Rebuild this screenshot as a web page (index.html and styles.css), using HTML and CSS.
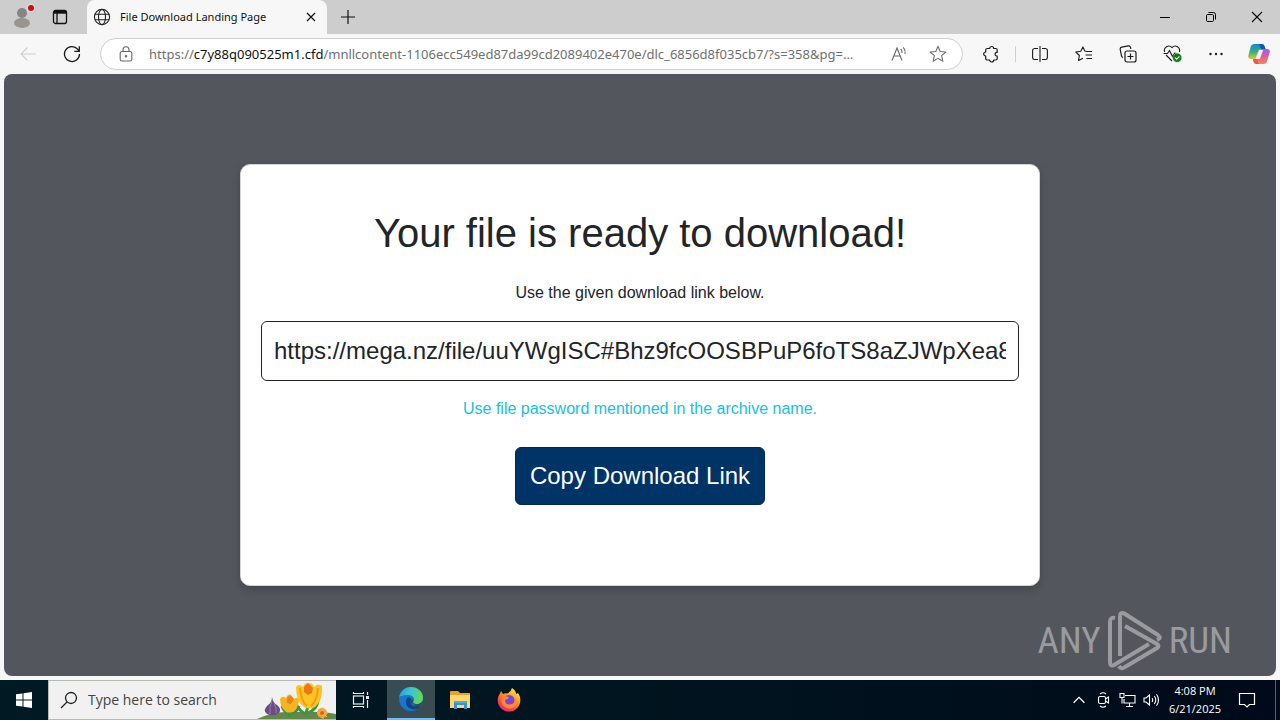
FILE: index.html
```html
<!DOCTYPE html>
<html lang="en">
<head>
<meta charset="utf-8">
<title>File Download Landing Page</title>
<link rel="stylesheet" href="styles.css">
</head>
<body>
<div class="desktop">
  <header class="titlebar">
    <button class="title-btn profile" aria-label="Profile">
      <svg width="26" height="30" viewBox="0 0 26 30"><circle cx="13" cy="11" r="5" fill="#858585"/><ellipse cx="13" cy="21" rx="8" ry="5" fill="#989591"/><circle cx="22" cy="6" r="4.5" fill="#e2d5d7"/><circle cx="22" cy="6" r="3" fill="#c50f1f"/></svg>
    </button>
    <button class="title-btn" aria-label="Tab actions">
      <svg width="16" height="16" viewBox="0 0 16 16" fill="none" stroke="#111" stroke-width="1.3"><rect x="1.5" y="1.5" width="13" height="13" rx="2"/><path d="M2 3.2h12" stroke-width="3"/><path d="M5 4v10"/></svg>
    </button>
    <div class="tab">
      <svg width="18" height="18" viewBox="0 0 18 18" fill="none" stroke="#222" stroke-width="1.1"><circle cx="9" cy="9" r="7.6"/><ellipse cx="9" cy="9" rx="3.5" ry="7.6"/><path d="M2 6.3h14M2 11.7h14"/></svg>
      <span class="tab-title">File Download Landing Page</span>
      <button class="tab-close" aria-label="Close tab"><svg width="10" height="10" viewBox="0 0 10 10" stroke="#111" stroke-width="1.2"><path d="M1 1l8 8M9 1L1 9"/></svg></button>
    </div>
    <button class="new-tab" aria-label="New tab"><svg width="14" height="14" viewBox="0 0 14 14" stroke="#111" stroke-width="1.2"><path d="M7 0v14M0 7h14"/></svg></button>
    <div class="window-controls">
      <button class="window-btn" aria-label="Minimize"><svg width="10" height="10" viewBox="0 0 10 10" stroke="#000"><path d="M0 5.5h10"/></svg></button>
      <button class="window-btn" aria-label="Restore"><svg width="12" height="12" viewBox="0 0 12 12" fill="none" stroke="#000"><rect x="1.5" y="3.5" width="7" height="7" rx="1.2"/><path d="M3.5 1.5h5a2 2 0 0 1 2 2v5"/></svg></button>
      <button class="window-btn" aria-label="Close"><svg width="12" height="12" viewBox="0 0 12 12" stroke="#000" stroke-width="1.1"><path d="M1 1l10 10M11 1L1 11"/></svg></button>
    </div>
  </header>

  <nav class="toolbar">
    <button class="tool" aria-label="Back" disabled><svg width="18" height="16" viewBox="0 0 18 16" fill="none" stroke="#cfcfcf" stroke-width="1.1"><path d="M17 8H2M8.500 1.500L2 8l6.500 6.500"/></svg></button>
    <button class="tool" aria-label="Refresh"><svg width="18" height="18" viewBox="0 0 18 18" fill="none" stroke="#1b1b1b" stroke-width="1.3"><path d="M16.500 9A7.500 7.500 0 1 1 14.800 4.300L16 6M16.300 1.200V6.300H11.300"/></svg></button>
    <div class="address">
      <button class="address-btn" aria-label="Site information"><svg width="14" height="16" viewBox="0 0 14 16" fill="none" stroke="#666" stroke-width="1.1"><rect x="1.200" y="5.500" width="11.600" height="9.500" rx="1.800"/><path d="M4 5.500V3.800a3 3 0 0 1 6 0v1.700"/><circle cx="7" cy="10.300" r=".7" fill="#555"/></svg></button>
      <div class="url">
        <input class="url-input" id="address" type="text" aria-label="Address">
        <label class="url-text" for="address">https://<span class="url-host">c7y88q090525m1.cfd</span>/mnllcontent-1106ecc549ed87da99cd2089402e470e/dlc_6856d8f035cb7/?s=358&amp;pg=...</label>
      </div>
      <button class="address-btn read" aria-label="Read aloud"><svg width="17" height="16" viewBox="0 0 17 16" fill="none" stroke="#666" stroke-width="1.1"><path d="M1 14.500L6 2l5 12.500M2.800 10h6.500M9.700 3q1.500 1.500 1.300 4M12.300 1.300q2.300 2.700 1.800 6.700"/></svg></button>
      <button class="address-btn star" aria-label="Add to favorites"><svg width="18" height="18" viewBox="0 0 18 18" fill="none" stroke="#707070" stroke-width="1.1" stroke-linejoin="round"><path d="M9 1.300l2.200 5.200 5.700.5-4.300 3.700 1.300 5.600L9 13.400l-4.900 2.900 1.300-5.600L1.100 7l5.700-.5z"/></svg></button>
    </div>
    <button class="tool" aria-label="Extensions"><svg width="18" height="18" viewBox="0 0 18 18" fill="none" stroke="#1b1b1b" stroke-width="1.2" stroke-linejoin="round"><path d="M5 3.500h2.700a2 2 0 0 1 4 0h2a1.500 1.500 0 0 1 1.500 1.500v2.300h-.7a1.900 1.900 0 0 0 0 3.700h.7v2.500a1.500 1.500 0 0 1-1.500 1.500h-2a2 2 0 0 1-4 0H5A1.500 1.500 0 0 1 3.700 13.500V11a2 2 0 0 1 0-4V5A1.500 1.500 0 0 1 5 3.500z"/></svg></button>
    <span class="divider"></span>
    <button class="tool" aria-label="Split screen"><svg width="16" height="16" viewBox="0 0 16 16" fill="none" stroke="#1b1b1b" stroke-width="1.1"><path d="M6 2.500H2.500A2 2 0 0 0 .6 4.400v7.200a2 2 0 0 0 1.900 1.900H6M10 2.500h3.500a2 2 0 0 1 1.900 1.900v7.200a2 2 0 0 1-1.900 1.900H10M8 0v16"/></svg></button>
    <button class="tool" aria-label="Favorites"><svg width="18" height="16" viewBox="0 0 18 16" fill="none" stroke="#1b1b1b" stroke-width="1.1" stroke-linejoin="round"><path d="M11.500 5.300L9.800 5 7.900.9 5.800 5.200.8 6l3.600 3.500-.9 5L8 12.300M11.500 5.500H17M10.500 9H17M11.500 12.500H17"/></svg></button>
    <button class="tool" aria-label="Collections"><svg width="18" height="18" viewBox="0 0 18 18" fill="none" stroke="#1b1b1b" stroke-width="1.200"><path d="M4 12.500a2 2 0 0 1-1.500-1.600L1.200 4.500a2 2 0 0 1 1.500-2.300l6.500-1.300a2 2 0 0 1 2.300 1.500l.3 1.400"/><rect x="6" y="6" width="11" height="11" rx="2"/><path d="M11.500 8.500v6M8.500 11.500h6"/></svg></button>
    <button class="tool" aria-label="Browser essentials"><svg width="20" height="18" viewBox="0 0 20 18" fill="none" stroke="#1b1b1b" stroke-width="1.1"><path d="M2.700 7A4.300 4.300 0 0 1 10 2.700 4.300 4.300 0 0 1 17.300 7M4 10l6 6M1.500 8.500h4L7.500 5.500l3 6 2-3.300h2"/><circle cx="15.200" cy="12.700" r="4.500" fill="#107c10" stroke="#fff" stroke-width=".3"/><path d="M13.200 12.700l1.500 1.500 2.700-2.700" stroke="#fff"/></svg></button>
    <button class="tool" aria-label="Settings and more"><svg width="16" height="16" viewBox="0 0 16 16" fill="#1b1b1b"><circle cx="2.500" cy="8" r="1.200"/><circle cx="8" cy="8" r="1.200"/><circle cx="13.500" cy="8" r="1.200"/></svg></button>
    <button class="tool copilot" aria-label="Copilot"><svg width="24" height="22" viewBox="0 0 24 22"><defs><linearGradient id="cp1" x1="0" y1="0" x2="0" y2="1"><stop offset="0" stop-color="#1685d8"/><stop offset=".55" stop-color="#38b17c"/><stop offset="1" stop-color="#e6c72b"/></linearGradient><linearGradient id="cp2" x1="0" y1="0" x2="0" y2="1"><stop offset="0" stop-color="#9a5df0"/><stop offset=".5" stop-color="#e25c9c"/><stop offset="1" stop-color="#f68a54"/></linearGradient></defs><path d="M7 1h8q2 0 2.700 2.600L18.500 6H14q-2 0-2.700 2L9 14.500q-.7 1.500-2.500 1.500H4q-3.200 0-2.800-3L3.700 3.700Q4.500 1 7 1z" fill="url(#cp1)"/><path d="M12 1h3q2 0 2.700 2.600L18.500 6H14z" fill="#1755b0"/><path d="M17 21H9.500Q7.300 21 6.500 18.400L6 16q2.500 0 3.200-2l2.200-6q.7-2 2.600-2h6q3.300 0 2.800 3l-2.700 9Q19.500 21 17 21z" fill="url(#cp2)"/><path d="M12 21H9.500Q7.300 21 6.500 18.400L6 16h4z" fill="#ed5948"/><path d="M12.200 7h4l-3.400 9H8.300z" fill="#f7ecf2"/></svg></button>
  </nav>

  <div class="viewport">
    <main class="card">
      <h1 class="heading">Your file is ready to download!</h1>
      <p class="intro"><label for="link">Use the given download link below.</label></p>
      <input class="link-input" id="link" type="text" readonly value="https://mega.nz/file/uuYWgISC#Bhz9fcOOSBPuP6foTS8aZJWpXea8">
      <p class="hint">Use file password mentioned in the archive name.</p>
      <button class="copy-btn">Copy Download Link</button>
    </main>
    <div class="watermark">
      <span>ANY</span>
      <svg width="56" height="62" viewBox="0 0 56 62" fill="none" stroke="#999b9f" stroke-width="4" stroke-linejoin="round"><path d="M8 8Q3 7 3 12v40q0 5 4 3l35-21"/><path d="M13 46V7q0-6 5-3l33 21q4 3-1 5"/><path d="M18 16l32 18q3 2 0 4L18 57q-4 3-6-1"/></svg>
      <span>RUN</span>
    </div>
  </div>

  <footer class="taskbar">
    <button class="start" aria-label="Start"><svg width="16" height="16" viewBox="0 0 16 16" fill="#fff"><path d="M0 2.300L6.500 1.400V7.500H0zM7.500 1.200L16 0v7.500H7.500zM0 8.500h6.500v6.100L0 13.700zM7.500 8.500H16V16l-8.500-1.200z"/></svg></button>
    <div class="search">
      <svg class="search-icon" width="18" height="18" viewBox="0 0 18 18" fill="none" stroke="#222" stroke-width="1.300"><circle cx="11" cy="7" r="5.500"/><path d="M7 11l-6 6"/></svg>
      <input class="search-input" type="text" placeholder="Type here to search" aria-label="Type here to search">
      <svg class="flowers" width="79" height="38" viewBox="0 0 79 38"><path d="M0 38Q18 29 44 31 64 30 79 33v5z" fill="#64874d"/><path d="M32 36q3-7 1-15M33 34q-6-3-8-9M36 33q4-3 6-8M48 34q4-8 3-17M47 32Q40 28 38 19M51 32q9-4 10-12" fill="none" stroke="#3c9444" stroke-width="3"/><path d="M15 16q1 6 5 8 5 4 2 8-5 4-12 1-5-4 1-9 4-3 4-8z" fill="#6b4d84"/><path d="M15 19q-3 8-2 14M17 22q3 5 2 10" stroke="#9b7ab0" fill="none"/><path d="M23 18q2-4 6-1 2-5 5-3l3 4q4-3 5 1-1 9-6 12-5 1-7 0-6-5-6-13z" fill="#f8b420"/><path d="M30 17l3-3 4 4-3 5-4-1z" fill="#e98217"/><path d="M39 6q3-4 7 0 2-5 6-4 4 0 5 4 4-4 8-1 1 15-7 21-6 3-11 0-8-6-8-20z" fill="#fbc421"/><path d="M47 6l4-4 5 5-1 5-4 2-4-3z" fill="#e87819"/><path d="M43 7q1 13 7 18M61 7q-1 13-7 18" stroke="#f09c18" stroke-width="2" fill="none"/><circle cx="65" cy="32" r="5" fill="#f5a02f"/><path d="M66 26v12M60 32h11M61 28l9 8" stroke="#f9b955"/><circle cx="65" cy="32" r="2" fill="#ca6824"/></svg>
    </div>
    <button class="task" aria-label="Task View"><svg width="18" height="18" viewBox="0 0 18 18" fill="none" stroke="#e8ecee" stroke-width="1.200"><rect x="1.500" y="5" width="10" height="8"/><path d="M1.500 1v1.500h10V1M1.500 17v-1.500h10V17M15.500 1v3M15.500 9v8"/><path d="M14 6.500h3" stroke-width="3"/></svg></button>
    <button class="task active" aria-label="Microsoft Edge"><svg width="24" height="24" viewBox="0 0 24 24"><defs><linearGradient id="e1" x1="0" y1="0" x2="1" y2=".3"><stop offset="0" stop-color="#249de0"/><stop offset=".5" stop-color="#37c6d3"/><stop offset="1" stop-color="#62d75e"/></linearGradient></defs><circle cx="12" cy="12" r="12" fill="#1677cc"/><path d="M19 21.700Q23 19 23.500 14l-5 3-4 1z" fill="#394c52"/><path d="M.2 10C1.500 4 6 0 12 0c7 0 12 5 12 10.700 0 4-3 6.300-6.500 6.300-3 0-4-1.300-3-2.700 1.500-2.600-.2-5.300-3.500-6C6 7.300 1.500 9 .2 10z" fill="url(#e1)"/><path d="M8 11c-3 6 1 11.500 7 11.500 3 0 5-1 6.500-3.500-6 2-10-1-10-4 0-1 .4-2 1-3-2-2-3.500-2-4.500-1z" fill="#0c4685"/><path d="M14.200 14.500c-1 1.500.3 2.500 3 2.500-3 .8-5.400-.2-5.400-2.300 0-1.200.4-2.200 1.200-2.700.7.500 1 1.200 1.200 2.500z" fill="#394c52"/></svg></button>
    <button class="task" aria-label="File Explorer"><svg width="22" height="20" viewBox="0 0 22 20"><path d="M1 2q0-1 1-1h7l2 2h10v15H1z" fill="#e6a329"/><path d="M1 5h20v13H1z" fill="#ffd86c"/><path d="M5 19v-7q0-1 1-1h11q1 0 1 1v7h-3v-4H8v4z" fill="#3594d4"/><path d="M6 12h11" stroke="#7fbde3"/></svg></button>
    <button class="task" aria-label="Firefox"><svg width="24" height="24" viewBox="0 0 24 24"><defs><linearGradient id="f1" x1=".8" y1="0" x2=".2" y2="1"><stop offset="0" stop-color="#fff34c"/><stop offset=".4" stop-color="#ff9524"/><stop offset=".75" stop-color="#ff3d4c"/><stop offset="1" stop-color="#e2258c"/></linearGradient></defs><path d="M15 0c3 2 4 4 4 6l2-1c2 3 2.500 5 2.300 8A11.300 11.300 0 1 1 3 5.500L4 3l2 3q2-1 4-.5Q14 4 15 0z" fill="url(#f1)"/><circle cx="12" cy="12.500" r="5.500" fill="#7745dd"/><path d="M5 8q4 0 7 1l-1 2q-3 0-3 2 1 4 5 3.500 5-.5 5-6c3 5 0 10-5.500 10C6 20.500 3 15 5 8z" fill="#ff8a2e"/></svg></button>
    <div class="tray">
      <button class="tray-btn" aria-label="Show hidden icons"><svg width="12" height="8" viewBox="0 0 12 8" fill="none" stroke="#fff" stroke-width="1.300"><path d="M.6 6.800L6 1.400l5.400 5.400"/></svg></button>
      <button class="tray-btn" aria-label="Meet Now"><svg width="14" height="16" viewBox="0 0 14 16" fill="none" stroke="#fff" stroke-width="1.100"><rect x="2.500" y="4.500" width="7" height="7" rx="1.500"/><path d="M9.500 7l3-2v6l-3-2M4 2Q7-.5 10 2M4 14q3 2.500 6 0"/></svg></button>
      <button class="tray-btn" aria-label="Network"><svg width="17" height="16" viewBox="0 0 17 16" fill="none" stroke="#fff" stroke-width="1.100"><path d="M6 3.500h10v7.500H5V7M10.500 11v3M7 14.500h7M1 1.500h4v4H1zM3 5.500v6"/></svg></button>
      <button class="tray-btn" aria-label="Volume"><svg width="17" height="14" viewBox="0 0 17 14" fill="none" stroke="#fff" stroke-width="1.100"><path d="M1 5h2l3.500-3v10L3 9H1zM9 5q1.500 2 0 4M11.300 3q3 4 0 8M13.500 1.300q4 5.700 0 11.400"/></svg></button>
      <button class="clock"><span>4:08 PM</span><span>6/21/2025</span></button>
      <button class="notify" aria-label="Notifications"><svg width="18" height="18" viewBox="0 0 18 18" fill="none" stroke="#fff" stroke-width="1.200"><path d="M1.500 2.500h15v11h-5L9 16l-2.500-2.500h-5z"/></svg></button>
      <button class="show-desktop" aria-label="Show desktop"></button>
    </div>
  </footer>
</div>
</body>
</html>
```
FILE: styles.css
```css
* { box-sizing: border-box; }
body { margin: 0; }
button { border: 0; padding: 0; background: none; font: inherit; color: inherit; display: flex; align-items: center; justify-content: center; flex: none; }
input { font: inherit; color: inherit; border: 0; padding: 0; background: none; outline: 0; min-width: 0; }
svg { flex: none; display: block; }

.desktop { min-height: 100vh; display: flex; flex-direction: column; background: #f7f7f7; color: #1b1b1b; font: 12px/16px "Open Sans", "Noto Sans", sans-serif; }

.titlebar { display: flex; height: 34px; background: #cdcdcd; padding-left: 3px; }
.title-btn { width: 38px; }
.tab { display: flex; align-items: center; width: 240px; margin-left: 8px; padding: 0 10px 0 6px; gap: 9px; background: #f7f7f7; border-radius: 8px 8px 0 0; }
.tab-title { flex: 1; font-family: "Noto Sans", sans-serif; font-size: 11px; white-space: nowrap; color: #111; }
.tab-close { width: 12px; height: 16px; }
.new-tab { width: 42px; }
.window-controls { display: flex; margin-left: auto; }
.window-btn { width: 46px; }

.toolbar { display: flex; align-items: center; height: 40px; padding-left: 6px; }
.tool { width: 44px; height: 32px; }
.copilot { width: 42px; }
.divider { width: 1px; height: 16px; margin: 0 2px; background: #cfcfcf; }
.address { display: flex; align-items: center; flex: 1; min-width: 0; height: 32px; margin: 0 6px; padding: 0 15px 0 16px; background: #fff; border: 1px solid #cfcfcf; border-radius: 16px; }
.address-btn { width: 18px; height: 24px; }
.url { flex: 1; min-width: 0; display: grid; margin-left: 14px; font-family: "Noto Sans", sans-serif; font-size: 13px; line-height: 20px; }
.url-input, .url-text { grid-area: 1 / 1; min-width: 0; }
.url-text { overflow: hidden; white-space: nowrap; color: #707070; }
.url-host { color: #111; }
.star { margin-left: 21px; }

.viewport { position: relative; flex: 1; display: flex; align-items: center; justify-content: center; margin: 0 4px 4px; padding: 24px; border-radius: 8px; background: #54565e; font-family: "Liberation Sans", Arial, sans-serif; }
.card { display: flex; flex-direction: column; align-items: center; width: 100%; max-width: 800px; padding: 44px 20px 80px; background: #fff; border: 1px solid #d4d5d7; border-radius: 10px; box-shadow: 0 4px 8px rgba(0, 0, 0, .2); color: #212529; font-size: 16px; line-height: 24px; text-align: center; }
.heading { margin: 0 0 24px; font-size: 40px; line-height: 48px; font-weight: 400; }
.intro { margin: 0 0 16px; }
.link-input { width: 100%; height: 60px; padding: 0 12px; border: 1px solid #212529; border-radius: 6px; font-size: 24px; }
.hint { margin: 16px 0 26px; color: #17c1dc; }
.copy-btn { height: 58px; padding: 0 14px; border: 1px solid #002a54; border-radius: 6px; background: #003366; color: #fff; font-size: 24px; line-height: 36px; }
.watermark { position: absolute; right: 44px; bottom: 4px; display: flex; align-items: center; gap: 6px; color: #999b9f; font: 37px/48px "Roboto Condensed", "Liberation Sans Narrow", "Liberation Sans", sans-serif; }

.taskbar { display: flex; height: 40px; background: linear-gradient(90deg, #001a24, #00131e 60%, #000a1a); color: #fff; }
.start { width: 48px; }
.search { display: flex; align-items: center; width: 288px; padding-left: 11px; background: #f1f1f1; border: 1px solid #b8b8b8; border-width: 1px 0 1px 1px; }
.search-input { flex: 1; margin-left: 10px; font-size: 14px; line-height: 20px; }
.search-input::placeholder { color: #444; opacity: 1; }
.flowers { align-self: flex-end; }
.task { width: 49px; }
.task.active { width: 48px; margin-left: 2px; background: #394c52; border-bottom: 2px solid #76b9ed; }
.tray { display: flex; margin-left: auto; }
.tray-btn { width: 24px; }
.clock { width: 64px; flex-direction: column; font-size: 11px; line-height: 18px; }
.notify { width: 40px; }
.show-desktop { width: 5px; margin-left: 8px; border-left: 1px solid #56606c; }
```
